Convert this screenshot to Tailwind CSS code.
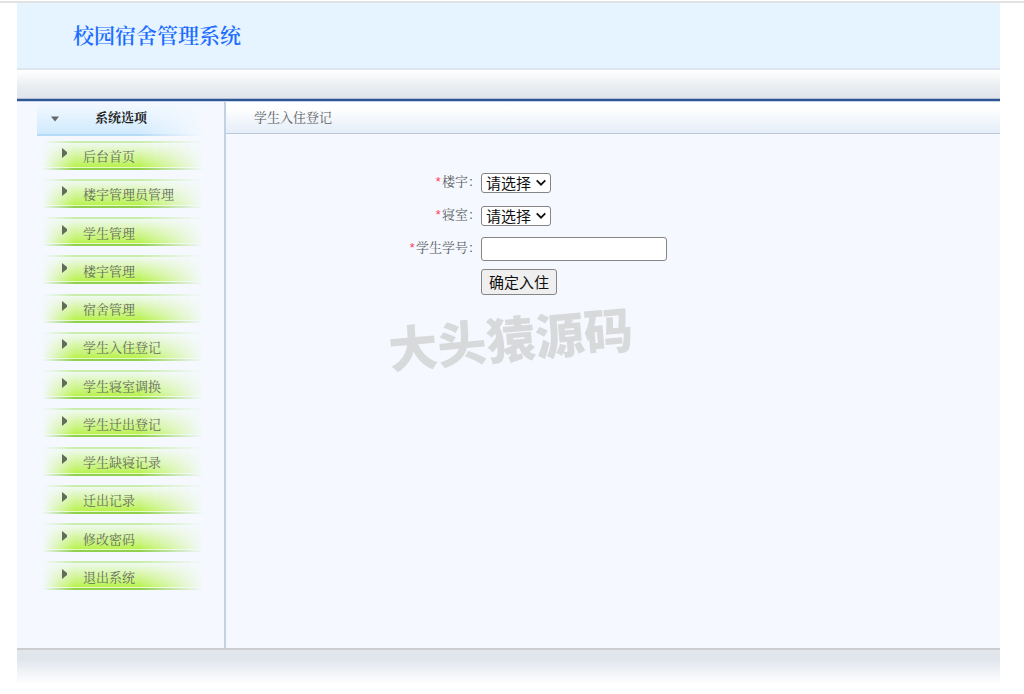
<!DOCTYPE html>
<html lang="zh-CN">
<head>
<meta charset="utf-8">
<meta name="viewport" content="width=device-width, initial-scale=1">
<title>校园宿舍管理系统</title>
<script src="https://cdn.jsdelivr.net/npm/@tailwindcss/browser@4"></script>
</head>
<body class="bg-white font-['Noto_Serif_CJK_SC','Noto_Sans_CJK_SC',serif] text-[13px] leading-5 text-[#5c6064]">
<div class="mt-px h-[2px] bg-[#e2e2e2]"></div>
<div class="ml-[17px] mr-6">
  <header>
    <div class="flex h-[67px] items-center border-b-2 border-[#dce5f0] bg-[#e5f4ff] pb-1 pl-14">
      <h1 class="text-[21px] font-semibold leading-8 text-[#1c6dff]">校园宿舍管理系统</h1>
    </div>
    <div class="h-7 bg-linear-to-b from-white via-[#e9edf0] via-60% to-[#e0e5ed]"></div>
    <div class="h-[4px] border-t border-b border-t-[#b4bfcf] border-b-[#c5d6ec] bg-[#2e5596]"></div>
  </header>

  <div class="flex min-h-[546px] bg-[#f5f9ff]">
    <nav class="w-[209px] shrink-0 border-r-2 border-[#c3d2e2] pl-5" aria-label="系统选项">
      <div class="relative mr-5 flex h-[34px] items-center pb-1">
        <div class="absolute inset-0 border-b-2 border-[#b5daf5] bg-linear-to-b from-[#f5f9ff] to-[#cfeafd] mask-r-from-60% mask-r-to-100%"></div>
        <svg class="relative ml-[13px] mt-1 h-[6px] w-[10px]" viewBox="0 0 10 6"><path d="M1 0.500h8L5 5.500z" fill="#666"/></svg>
        <h2 class="relative ml-[35px] text-[13px] font-bold text-[#222]">系统选项</h2>
      </div>
      <ul id="menu" class="ml-[5px] mr-5 grid h-[459px] auto-rows-fr"></ul>
    </nav>

    <main class="relative flex-1">
      <h2 class="h-8 border-b border-[#bac9d9] bg-linear-to-b from-white from-20% to-[#e4edf8] pl-7 leading-[30px]">学生入住登记</h2>
      <form class="grid grid-cols-[255px_1fr] items-center pt-8">
        <label for="building" class="pb-1 text-right"><span class="align-middle font-['Liberation_Mono',monospace] leading-4 text-[#ff4058]">*</span>楼宇：</label>
        <div class="flex h-[33px] items-center">
          <span class="relative block h-5 w-[70px]">
            <select id="building" class="h-5 w-full appearance-none rounded-[3px] border border-[#858585] bg-white pl-1 font-['Noto_Sans_CJK_SC',sans-serif] text-[15px] leading-4 text-[#111]"><option>请选择</option></select>
            <svg class="pointer-events-none absolute right-[5px] top-[6px] h-2 w-[10px]" viewBox="0 0 10 8"><path d="M0.700 1.300l4.300 4.400 4.300-4.400" fill="none" stroke="#111" stroke-width="1.800"/></svg>
          </span>
        </div>
        <label for="room" class="pb-1 text-right"><span class="align-middle font-['Liberation_Mono',monospace] leading-4 text-[#ff4058]">*</span>寝室：</label>
        <div class="flex h-[33px] items-center">
          <span class="relative block h-5 w-[70px]">
            <select id="room" class="h-5 w-full appearance-none rounded-[3px] border border-[#858585] bg-white pl-1 font-['Noto_Sans_CJK_SC',sans-serif] text-[15px] leading-4 text-[#111]"><option>请选择</option></select>
            <svg class="pointer-events-none absolute right-[5px] top-[6px] h-2 w-[10px]" viewBox="0 0 10 8"><path d="M0.700 1.300l4.300 4.400 4.300-4.400" fill="none" stroke="#111" stroke-width="1.800"/></svg>
          </span>
        </div>
        <label for="student" class="pb-1 text-right"><span class="align-middle font-['Liberation_Mono',monospace] leading-4 text-[#ff4058]">*</span>学生学号：</label>
        <div class="flex h-[33px] items-center">
          <input id="student" type="text" class="h-6 w-[186px] rounded-[3px] border border-[#858585] bg-white px-1">
        </div>
        <div class="col-start-2 flex h-[33px] items-center">
          <button type="button" class="h-[26px] w-[76px] rounded-[3px] border border-[#858585] bg-[#efefef] font-['Noto_Sans_CJK_SC',sans-serif] text-[15px] leading-5 text-[#111]">确定入住</button>
        </div>
      </form>
      <div class="pointer-events-none absolute left-[162px] top-[202px] -rotate-5 whitespace-nowrap font-['Noto_Sans_CJK_SC',sans-serif] text-[49px] font-black leading-[66px] text-[#d8d9db]" aria-hidden="true">大头猿源码</div>
    </main>
  </div>

  <footer class="h-9 border-t-2 border-[#cbcdd0] bg-linear-to-b from-[#e2e7eb] via-[#e0e5ed] via-25% to-white"></footer>
</div>
<template id="item">
  <li class="flex flex-col justify-center">
    <a href="#" class="relative flex h-[29px] items-center">
      <span class="absolute inset-0 flex flex-col mask-l-from-80% mask-l-to-100% mask-r-from-60% mask-r-to-100%">
        <span class="h-[2px] bg-[#c9edaa]"></span>
        <span class="h-[24px] bg-linear-to-b from-[#f0f9f0] via-[#d6f5a2] via-50% to-[#b9f24a]"></span>
        <span class="h-px bg-[#e6fac8]"></span>
        <span class="h-[2px] bg-[#8fd04c]"></span>
      </span>
      <svg class="relative mb-1 ml-5 h-[10px] w-[5px]" viewBox="0 0 5 10"><path d="M0 0v10L5 6V4z" fill="#626b5c"/></svg>
      <span class="label relative ml-4 mt-[2px] text-[#646c5c]"></span>
    </a>
  </li>
</template>
<script>
  const names = ['后台首页','楼宇管理员管理','学生管理','楼宇管理','宿舍管理','学生入住登记','学生寝室调换','学生迁出登记','学生缺寝记录','迁出记录','修改密码','退出系统'];
  const menu = document.getElementById('menu');
  for (const name of names) {
    const row = document.getElementById('item').content.cloneNode(true);
    row.querySelector('.label').textContent = name;
    menu.append(row);
  }
</script>
</body>
</html>
